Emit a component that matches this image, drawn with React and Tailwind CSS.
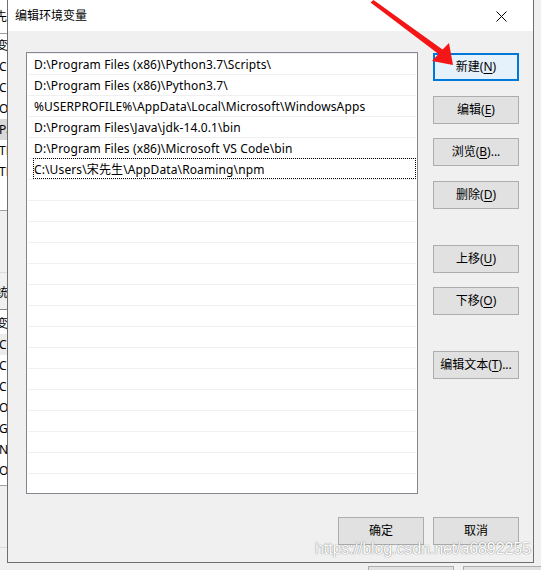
import React from 'react';

const PATHS = [
  'D:\\Program Files (x86)\\Python3.7\\Scripts\\',
  'D:\\Program Files (x86)\\Python3.7\\',
  '%USERPROFILE%\\AppData\\Local\\Microsoft\\WindowsApps',
  'D:\\Program Files\\Java\\jdk-14.0.1\\bin',
  'D:\\Program Files (x86)\\Microsoft VS Code\\bin',
  'C:\\Users\\宋先生\\AppData\\Roaming\\npm',
];

const USER_VARS = ['变', 'Ch', 'CL', 'Or', 'Pa', 'TE', 'TM'];
const SYS_VARS = ['变', 'Ch', 'CL', 'Co', 'Or', 'GI', 'NI', 'OS'];

function Btn({ label, keyChar, tail = '', primary = false, className = '' }) {
  return (
    <div
      className={
        'w-[86px] h-[28px] flex items-center justify-center text-[12px] text-black ' +
        (primary ? 'border-2 border-[#0078d7] bg-[#e5f1fb] ' : 'border border-[#adadad] bg-[#e1e1e1] ') +
        className
      }
    >
      {label}
      {keyChar && (
        <>
          (<span className="underline underline-offset-2">{keyChar}</span>)
        </>
      )}
      {tail}
    </div>
  );
}

function LeftStrip() {
  return (
    <div className="w-[7px] h-[570px] shrink-0 overflow-hidden flex flex-col text-[12px] text-black">
      <div className="h-[33px] bg-white flex items-center">
        <span className="-ml-[5px]">先</span>
      </div>
      <div className="h-px bg-[#a0a0a0]" />
      <div className="h-[176px] bg-white flex flex-col pt-[1px]">
        {USER_VARS.map((v, i) => (
          <div key={i} className={'h-[21px] flex items-center ' + (v === 'Pa' ? 'bg-[#d9d9d9]' : '')}>
            <span className={v === '变' ? '-ml-[4px]' : '-ml-[1px]'}>{v}</span>
          </div>
        ))}
      </div>
      <div className="h-px bg-[#a0a0a0]" />
      <div className="h-[61px]" />
      <div className="h-px bg-[#dadada]" />
      <div className="h-[36px] flex items-center pt-[3px]">
        <span className="-ml-[4px]">统</span>
      </div>
      <div className="h-px bg-[#828790]" />
      <div className="h-[175px] bg-white flex flex-col pt-[3px]">
        {SYS_VARS.map((v, i) => (
          <div key={i} className={'h-[21px] flex items-center ' + (v === 'Ch' && i === 1 ? 'bg-[#ececec]' : '')}>
            <span className={v === '变' ? '-ml-[4px]' : '-ml-[1px]'}>{v}</span>
          </div>
        ))}
      </div>
      <div className="h-px bg-[#a0a0a0]" />
      <div className="h-[61px]" />
      <div className="h-px bg-[#dadada]" />
    </div>
  );
}

function RightStrip() {
  return (
    <div className="w-[8px] h-[570px] shrink-0 overflow-hidden flex flex-col">
      <div className="h-[18px]" />
      <div className="h-px bg-[#dadada]" />
      <div className="h-[17px]" />
      <div className="h-px bg-[#828790] ml-[1px]" />
      <div className="h-[174px] bg-white ml-[1px] flex flex-col pl-[2px]">
        <div className="h-[14px] w-px bg-[#e3e3e3] mt-[2px]" />
        <div className="h-[20px] w-[2px] bg-[#f0f0f0] mt-[73px]" />
      </div>
      <div className="h-px bg-[#828790] ml-[1px]" />
      <div className="h-[16px]" />
      <div className="h-[28px] border border-[#adadad] bg-[#e1e1e1] ml-[1px]" />
      <div className="h-[34px]" />
      <div className="h-px bg-[#828790] ml-[1px]" />
      <div className="h-[175px] bg-white ml-[1px] flex flex-col items-end">
        <div className="h-[40px] w-[4px] bg-[#cdcdcd] mt-[17px]" />
      </div>
      <div className="h-px bg-[#828790] ml-[1px]" />
      <div className="h-[16px]" />
      <div className="h-[28px] border border-[#adadad] bg-[#e1e1e1] ml-[1px]" />
    </div>
  );
}

function PathList() {
  const rows = Array.from({ length: 21 }, (_, i) => PATHS[i] || '');
  return (
    <div className="w-[392px] h-[442px] border border-[#828790] bg-white overflow-hidden tracking-[0.12px]">
      {rows.map((p, i) =>
        i === 5 ? (
          <div key={i} className="h-[21px] mx-[1px] border-t border-[#f0f0f0] flex">
            <div className="ml-[5px] -mt-[1px] h-[21px] flex-1 border border-dotted border-black flex items-center leading-none pt-[2px] whitespace-nowrap">
              {p}
            </div>
          </div>
        ) : (
          <div key={i} className="h-[21px] mx-[1px] border-t border-[#f0f0f0] pl-[6px] flex items-center leading-none pt-[2px] whitespace-nowrap">
            {p}
          </div>
        )
      )}
    </div>
  );
}

function Dialog() {
  return (
    <div className="w-[527px] h-[563px] shrink-0 border-x border-b border-[#6e6e6e] bg-[#f0f0f0] flex flex-col">
      <div className="h-[31px] bg-white flex items-center justify-between pl-[7px] pr-[25px] pt-[1px]">
        <span className="text-[12px] text-black">编辑环境变量</span>
        <svg width="11" height="11" viewBox="0 0 11 11" className="mr-[1px]">
          <path d="M0.5 0.5 L10.5 10.5 M10.5 0.5 L0.5 10.5" stroke="#000" strokeWidth="1" />
        </svg>
      </div>
      <div className="flex pl-[18px] pt-[21px]">
        <PathList />
        <div className="ml-[15px] pt-[1px] flex flex-col">
          <Btn label="新建" keyChar="N" primary />
          <Btn label="编辑" keyChar="E" className="mt-[15px]" />
          <Btn label="浏览" keyChar="B" tail="..." className="mt-[14px]" />
          <Btn label="删除" keyChar="D" className="mt-[15px]" />
          <Btn label="上移" keyChar="U" className="mt-[36px]" />
          <Btn label="下移" keyChar="O" className="mt-[14px]" />
          <Btn label="编辑文本" keyChar="T" tail="..." className="mt-[36px]" />
        </div>
      </div>
      <div className="flex justify-end gap-[9px] pr-[14px] mt-[23px]">
        <Btn label="确定" />
        <Btn label="取消" />
      </div>
    </div>
  );
}

export default function App() {
  return (
    <div className="relative w-[541px] h-[570px] overflow-hidden bg-[#f0f0f0] font-['Noto_Sans','Noto_Sans_CJK_SC',sans-serif] text-[12px] text-black">
      <div className="flex">
        <LeftStrip />
        <div className="flex flex-col">
          <Dialog />
          <div className="flex pt-[3px] pl-[361px] gap-[9px]">
            <div className="w-[86px] h-[10px] border border-[#adadad] bg-[#e1e1e1]" />
            <div className="w-[86px] h-[10px] border border-[#adadad] bg-[#e1e1e1]" />
          </div>
        </div>
        <RightStrip />
      </div>

      {/* red annotation arrow */}
      <svg className="absolute left-0 top-0 pointer-events-none" width="541" height="570">
        <polygon points="370.5,2.5 373.5,0 442.5,49.5 449,43 453,65 432,61 438.5,54" fill="#f41616" />
      </svg>

      {/* csdn watermark */}
      <div className="absolute left-[315px] top-[539px] text-[16px] leading-[20px] tracking-[-0.1px] font-['Liberation_Sans',sans-serif] text-white [text-shadow:0_0_1px_#7a7a7a,0_0_1px_#9a9a9a]">
        https://blog.csdn.net/a6892255
      </div>
    </div>
  );
}
